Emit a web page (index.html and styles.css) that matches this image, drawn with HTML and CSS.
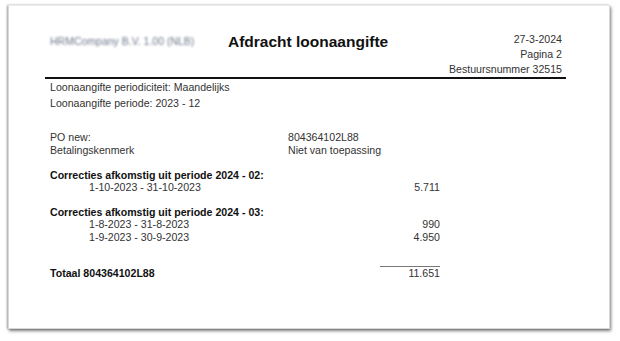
FILE: index.html
```html
<!DOCTYPE html>
<html lang="nl">
<head>
<meta charset="utf-8">
<title>Afdracht loonaangifte</title>
<link rel="stylesheet" href="styles.css">
</head>
<body>
<div class="page">
  <div class="sheet">
    <header class="head">
      <div class="company">HRMCompany B.V. 1.00 (NLB)</div>
      <h1 class="title">Afdracht loonaangifte</h1>
      <div class="meta">
        <div>27-3-2024</div>
        <div>Pagina 2</div>
        <div>Bestuursnummer 32515</div>
      </div>
    </header>
    <div class="rule"></div>
    <div class="intro">
      <div>Loonaangifte periodiciteit: Maandelijks</div>
      <div>Loonaangifte periode: 2023 - 12</div>
    </div>
    <div class="grid po">
      <div>PO new:</div><div>804364102L88</div>
      <div>Betalingskenmerk</div><div>Niet van toepassing</div>
    </div>
    <div class="grid corr">
      <div class="bold span">Correcties afkomstig uit periode 2024 - 02:</div>
      <div class="range">1-10-2023 - 31-10-2023</div><div class="amt">5.711</div>
    </div>
    <div class="grid corr second">
      <div class="bold span">Correcties afkomstig uit periode 2024 - 03:</div>
      <div class="range">1-8-2023 - 31-8-2023</div><div class="amt">990</div>
      <div class="range">1-9-2023 - 30-9-2023</div><div class="amt">4.950</div>
    </div>
    <div class="grid total">
      <div class="bold">Totaal 804364102L88</div><div class="amt sum">11.651</div>
    </div>
  </div>
</div>
</body>
</html>
```
FILE: styles.css
```css
html, body {
  margin: 0;
  padding: 0;
  background: #ffffff;
}
.page {
  padding: 5px 10px 12px 8px;
  font-family: "Liberation Sans", Arial, sans-serif;
  color: #222;
}
.sheet {
  width: 602px;
  height: 324px;
  background: #fff;
  border: 1px solid #d8d8d8;
  border-top-color: #ececec;
  box-shadow: 1px 2px 3px rgba(0,0,0,0.5), -1px 0 2px rgba(0,0,0,0.3);
  box-sizing: border-box;
}
.head {
  display: flex;
  align-items: flex-start;
  padding: 25.5px 47px 0 41px;
  height: 71px;
  box-sizing: border-box;
}
.company {
  width: 178px;
  margin-top: 3px;
  font-size: 10.5px;
  line-height: 13px;
  color: #6f788c;
  filter: blur(1.1px);
  white-space: nowrap;
}
.title {
  margin: 1.5px 0 0 0;
  font-size: 15.5px;
  line-height: 18px;
  font-weight: bold;
  color: #111;
  flex: 1;
}
.meta {
  text-align: right;
  font-size: 10.6px;
  line-height: 15px;
  color: #333;
}
.rule {
  margin: 0 43px 0 36px;
  height: 2px;
  background: #111;
}
.intro {
  padding-left: 41px;
  font-size: 10.6px;
  line-height: 16px;
  color: #333;
}
.grid {
  display: grid;
  grid-template-columns: 238px 152px;
  padding-left: 41px;
  font-size: 10.6px;
  color: #333;
}
.po {
  margin-top: 19.5px;
  line-height: 13px;
}
.corr {
  margin-top: 12px;
  line-height: 12px;
}
.corr.second {
  margin-top: 13px;
  line-height: 12.5px;
}
.bold {
  font-weight: bold;
  color: #111;
}
.span {
  grid-column: 1 / 3;
}
.range {
  padding-left: 39px;
}
.amt {
  text-align: right;
}
.total {
  margin-top: 22.5px;
  line-height: 13px;
  align-items: end;
}
.sum {
  justify-self: end;
  width: 60px;
  border-top: 1px solid #777;
}
```
